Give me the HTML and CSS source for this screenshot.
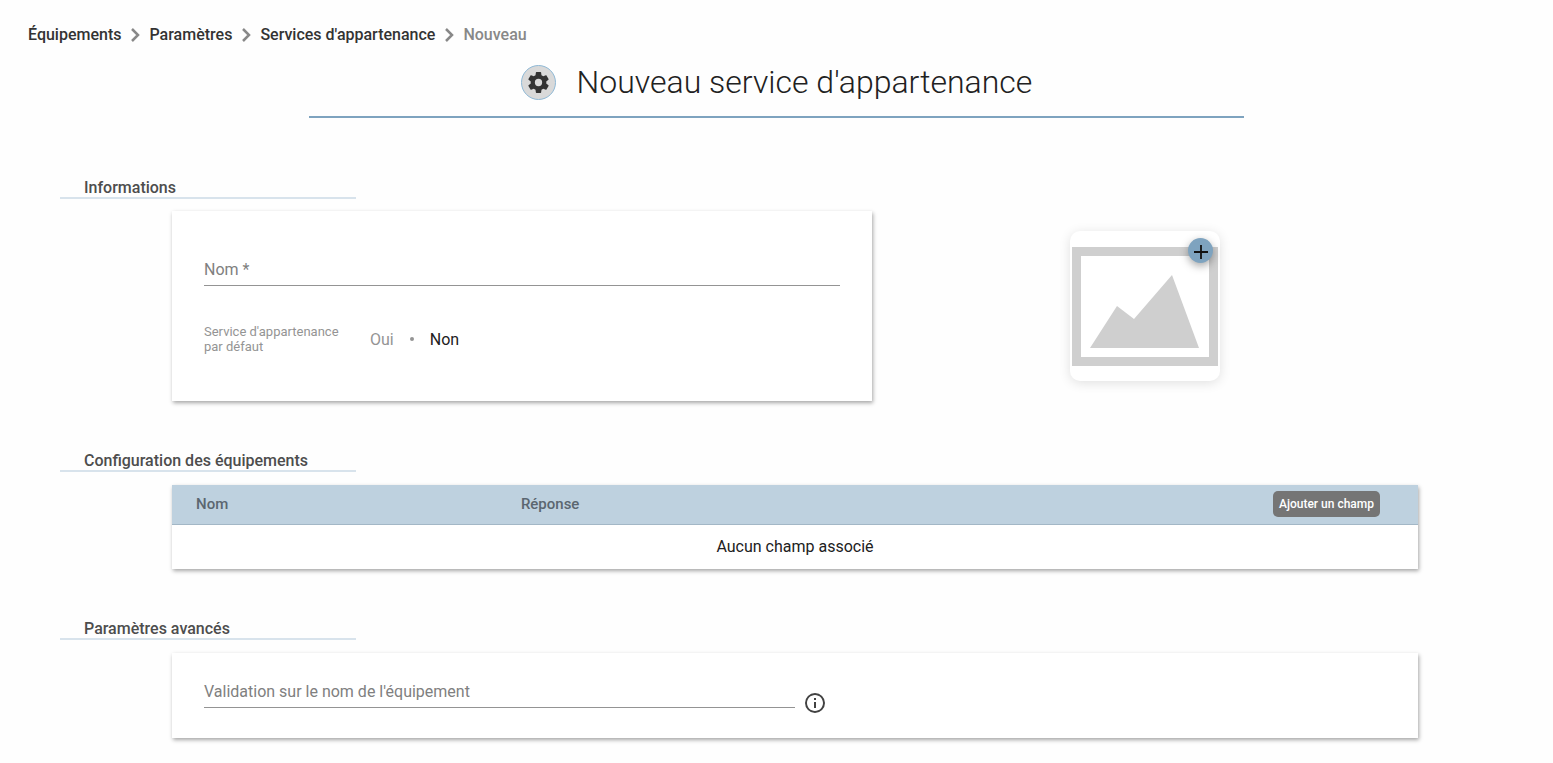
FILE: index.html
```
<!doctype html>
<html lang="fr">
<head>
  <meta charset="UTF-8">
  <title>Nouveau service d'appartenance</title>
  <link rel="stylesheet" href="styles.css">
</head>
<body>
  <nav class="breadcrumb">
    <a href="#">Équipements</a>
    <svg class="chevron" viewBox="0 0 10 14"><path d="M2 1l6 6-6 6"/></svg>
    <a href="#">Paramètres</a>
    <svg class="chevron" viewBox="0 0 10 14"><path d="M2 1l6 6-6 6"/></svg>
    <a href="#">Services d'appartenance</a>
    <svg class="chevron" viewBox="0 0 10 14"><path d="M2 1l6 6-6 6"/></svg>
    <span class="current">Nouveau</span>
  </nav>

  <header class="page-title">
    <span class="title-icon">
      <svg viewBox="0 0 24 24"><path d="M12,15.5A3.5,3.5 0 0,1 8.5,12A3.5,3.5 0 0,1 12,8.5A3.5,3.5 0 0,1 15.5,12A3.5,3.5 0 0,1 12,15.5M19.43,12.97C19.47,12.65 19.5,12.33 19.5,12C19.5,11.67 19.47,11.34 19.43,11L21.54,9.37C21.73,9.22 21.78,8.95 21.66,8.73L19.66,5.27C19.54,5.05 19.27,4.96 19.05,5.05L16.56,6.05C16.04,5.66 15.5,5.32 14.87,5.07L14.5,2.42C14.46,2.18 14.25,2 14,2H10C9.75,2 9.54,2.18 9.5,2.42L9.13,5.07C8.5,5.32 7.96,5.66 7.44,6.05L4.95,5.05C4.73,4.96 4.46,5.05 4.34,5.27L2.34,8.73C2.21,8.95 2.27,9.22 2.46,9.37L4.57,11C4.53,11.34 4.5,11.67 4.5,12C4.5,12.33 4.53,12.65 4.57,12.97L2.46,14.63C2.27,14.78 2.21,15.05 2.34,15.27L4.34,18.73C4.46,18.95 4.73,19.03 4.95,18.95L7.44,17.94C7.96,18.34 8.5,18.68 9.13,18.93L9.5,21.58C9.54,21.82 9.75,22 10,22H14C14.25,22 14.46,21.82 14.5,21.58L14.87,18.93C15.5,18.67 16.04,18.34 16.56,17.94L19.05,18.95C19.27,19.03 19.54,18.95 19.66,18.73L21.66,15.27C21.78,15.05 21.73,14.78 21.54,14.63L19.43,12.97Z"/></svg>
    </span>
    <h1>Nouveau service d'appartenance</h1>
  </header>

  <main>
    <section>
      <h2>Informations</h2>
      <div class="section-body infos">
        <form class="card card-infos">
          <div class="field">
            <input type="text" id="nom" placeholder=" " required>
            <label for="nom">Nom *</label>
          </div>
          <div class="choice" role="radiogroup" aria-labelledby="defaut">
            <span class="choice-label" id="defaut">Service d'appartenance par défaut</span>
            <input type="radio" name="defaut" id="oui"><label for="oui">Oui</label>
            <span class="dot"></span>
            <input type="radio" name="defaut" id="non" checked><label for="non">Non</label>
          </div>
        </form>
        <div class="picture-zone">
          <div class="picture">
            <svg viewBox="0 0 150 150">
              <path class="frame" fill-rule="evenodd" d="M2 16h146v119H2zM11 25v101h128V25z"/>
              <path class="mountain" d="M20 117l27-42 17 13 38-44 27 73z"/>
            </svg>
            <button type="button" class="add-picture" aria-label="Ajouter une image">
              <svg viewBox="0 0 14 14"><path d="M7 0v14M0 7h14"/></svg>
            </button>
          </div>
        </div>
      </div>
    </section>

    <section>
      <h2>Configuration des équipements</h2>
      <div class="section-body">
        <table class="card">
          <thead>
            <tr>
              <th class="col-nom">Nom</th>
              <th>Réponse</th>
              <th class="col-action"><button type="button">Ajouter un champ</button></th>
            </tr>
          </thead>
          <tbody>
            <tr>
              <td colspan="3">Aucun champ associé</td>
            </tr>
          </tbody>
        </table>
      </div>
    </section>

    <section>
      <h2>Paramètres avancés</h2>
      <div class="section-body">
        <form class="card card-params">
          <div class="field">
            <input type="text" id="validation" placeholder=" ">
            <label for="validation">Validation sur le nom de l'équipement</label>
          </div>
          <svg class="info" viewBox="0 0 24 24"><path d="M11,9H13V7H11M12,20C7.59,20 4,16.41 4,12C4,7.59 7.59,4 12,4C16.41,4 20,7.59 20,12C20,16.41 16.41,20 12,20M12,2A10,10 0 0,0 2,12A10,10 0 0,0 12,22A10,10 0 0,0 22,12A10,10 0 0,0 12,2M11,17H13V11H11V17Z"/></svg>
        </form>
      </div>
    </section>
  </main>
</body>
</html>
```
FILE: styles.css
```
* {
  box-sizing: border-box;
}

body {
  margin: 0;
  background: #fefefe;
  color: #212121;
  font-family: Roboto, "Liberation Sans", sans-serif;
  font-size: 16px;
}

h1, h2 {
  margin: 0;
}

button, input {
  font-family: inherit;
}

.breadcrumb {
  display: flex;
  align-items: center;
  gap: 9px;
  padding: 25px 28px 0;
  line-height: 20px;
  font-weight: 500;
}

.breadcrumb a {
  color: #333;
  text-decoration: none;
}

.breadcrumb .current {
  color: #888;
}

.chevron {
  width: 10px;
  height: 14px;
  fill: none;
  stroke: #888;
  stroke-width: 2.5;
}

.page-title {
  display: flex;
  justify-content: center;
  align-items: center;
  gap: 21px;
  width: calc(60% + 4px);
  height: 73px;
  margin: 0 auto;
  padding-top: 3px;
  border-bottom: 2px solid #7ea3bf;
}

.page-title h1 {
  font-size: 32px;
  font-weight: 300;
  line-height: 40px;
}

.title-icon {
  display: flex;
  justify-content: center;
  align-items: center;
  width: 35px;
  height: 35px;
  border: 1px solid #8fb9d6;
  border-radius: 50%;
  background: #d9d9d9;
}

.title-icon svg {
  width: 25px;
  height: 25px;
  fill: #333;
}

main {
  padding: 60px 60px 20px;
}

section + section {
  margin-top: 50px;
}

h2 {
  width: 296px;
  height: 21px;
  padding-left: 24px;
  border-bottom: 2px solid #d8e3ec;
  color: #4d4d4d;
  font-size: 16px;
  font-weight: 500;
  line-height: 19px;
}

.section-body {
  margin: 13px 75px 0 112px;
}

.card {
  background: #fff;
  box-shadow: 1px 2px 4px rgba(0, 0, 0, 0.35);
}

/* Informations */
.infos {
  display: flex;
  margin-top: 12px;
}

.card-infos {
  width: 56.2%;
  height: 190px;
  padding: 44px 32px 0;
}

.field {
  position: relative;
}

.field input {
  display: block;
  width: 100%;
  height: 31px;
  padding: 0 0 4px;
  border: 0;
  border-bottom: 1px solid #949494;
  background: transparent;
  font-size: 16px;
  outline: none;
}

.field label {
  position: absolute;
  top: 5px;
  left: 0;
  color: #808080;
  line-height: 20px;
  pointer-events: none;
}

.field input:not(:placeholder-shown) + label {
  display: none;
}

.choice {
  display: flex;
  align-items: center;
  margin-top: 38px;
}

.choice-label {
  width: 142px;
  margin-right: 24px;
  color: #949494;
  font-size: 13px;
  line-height: 15px;
}

.choice input {
  appearance: none;
  width: 0;
  margin: 0;
}

.choice label {
  color: #949494;
  cursor: pointer;
}

.choice input:checked + label {
  color: #212121;
}

.dot {
  width: 4px;
  height: 4px;
  margin: 0 16px;
  border-radius: 50%;
  background: #949494;
}

.picture-zone {
  flex: 1;
  display: flex;
  justify-content: center;
  padding-top: 20px;
}

.picture {
  position: relative;
  width: 150px;
  height: 150px;
  border-radius: 10px;
  background: #fff;
  box-shadow: 0 2px 12px rgba(0, 0, 0, 0.12);
}

.picture > svg {
  display: block;
  fill: #cfcfcf;
}

.add-picture {
  display: flex;
  justify-content: center;
  align-items: center;
  position: absolute;
  top: 7px;
  right: 7px;
  width: 25px;
  height: 25px;
  padding: 0;
  border: 0;
  border-radius: 50%;
  background: #7ea3bf;
  box-shadow: 0 3px 8px rgba(0, 0, 0, 0.35);
  cursor: pointer;
}

.add-picture svg {
  width: 14px;
  height: 14px;
  margin-top: 2px;
  stroke: #111;
  stroke-width: 1.8;
}

/* Configuration */
table {
  width: 100%;
  border-collapse: collapse;
}

thead tr {
  height: 39px;
  background: #bed1df;
  border-bottom: 1px solid #a3b7c6;
}

th {
  padding: 0;
  color: #5b6670;
  font-size: 15px;
  font-weight: 500;
  text-align: left;
}

.col-nom {
  width: 28%;
  padding-left: 24px;
}

.col-action {
  padding-right: 38px;
  text-align: right;
}

.col-action button {
  height: 26px;
  padding: 0 6px;
  border: 0;
  border-radius: 5px;
  background: #757575;
  color: #fff;
  font-size: 12px;
  font-weight: 500;
  vertical-align: middle;
  cursor: pointer;
}

td {
  height: 45px;
  padding: 0;
  text-align: center;
}

/* Paramètres avancés */
.card-params {
  display: flex;
  gap: 8px;
  height: 85px;
  padding: 24px 32px 0;
}

.card-params .field {
  flex: 0 0 50%;
}

.info {
  width: 24px;
  height: 24px;
  margin-top: 14px;
  fill: #424242;
}
```
